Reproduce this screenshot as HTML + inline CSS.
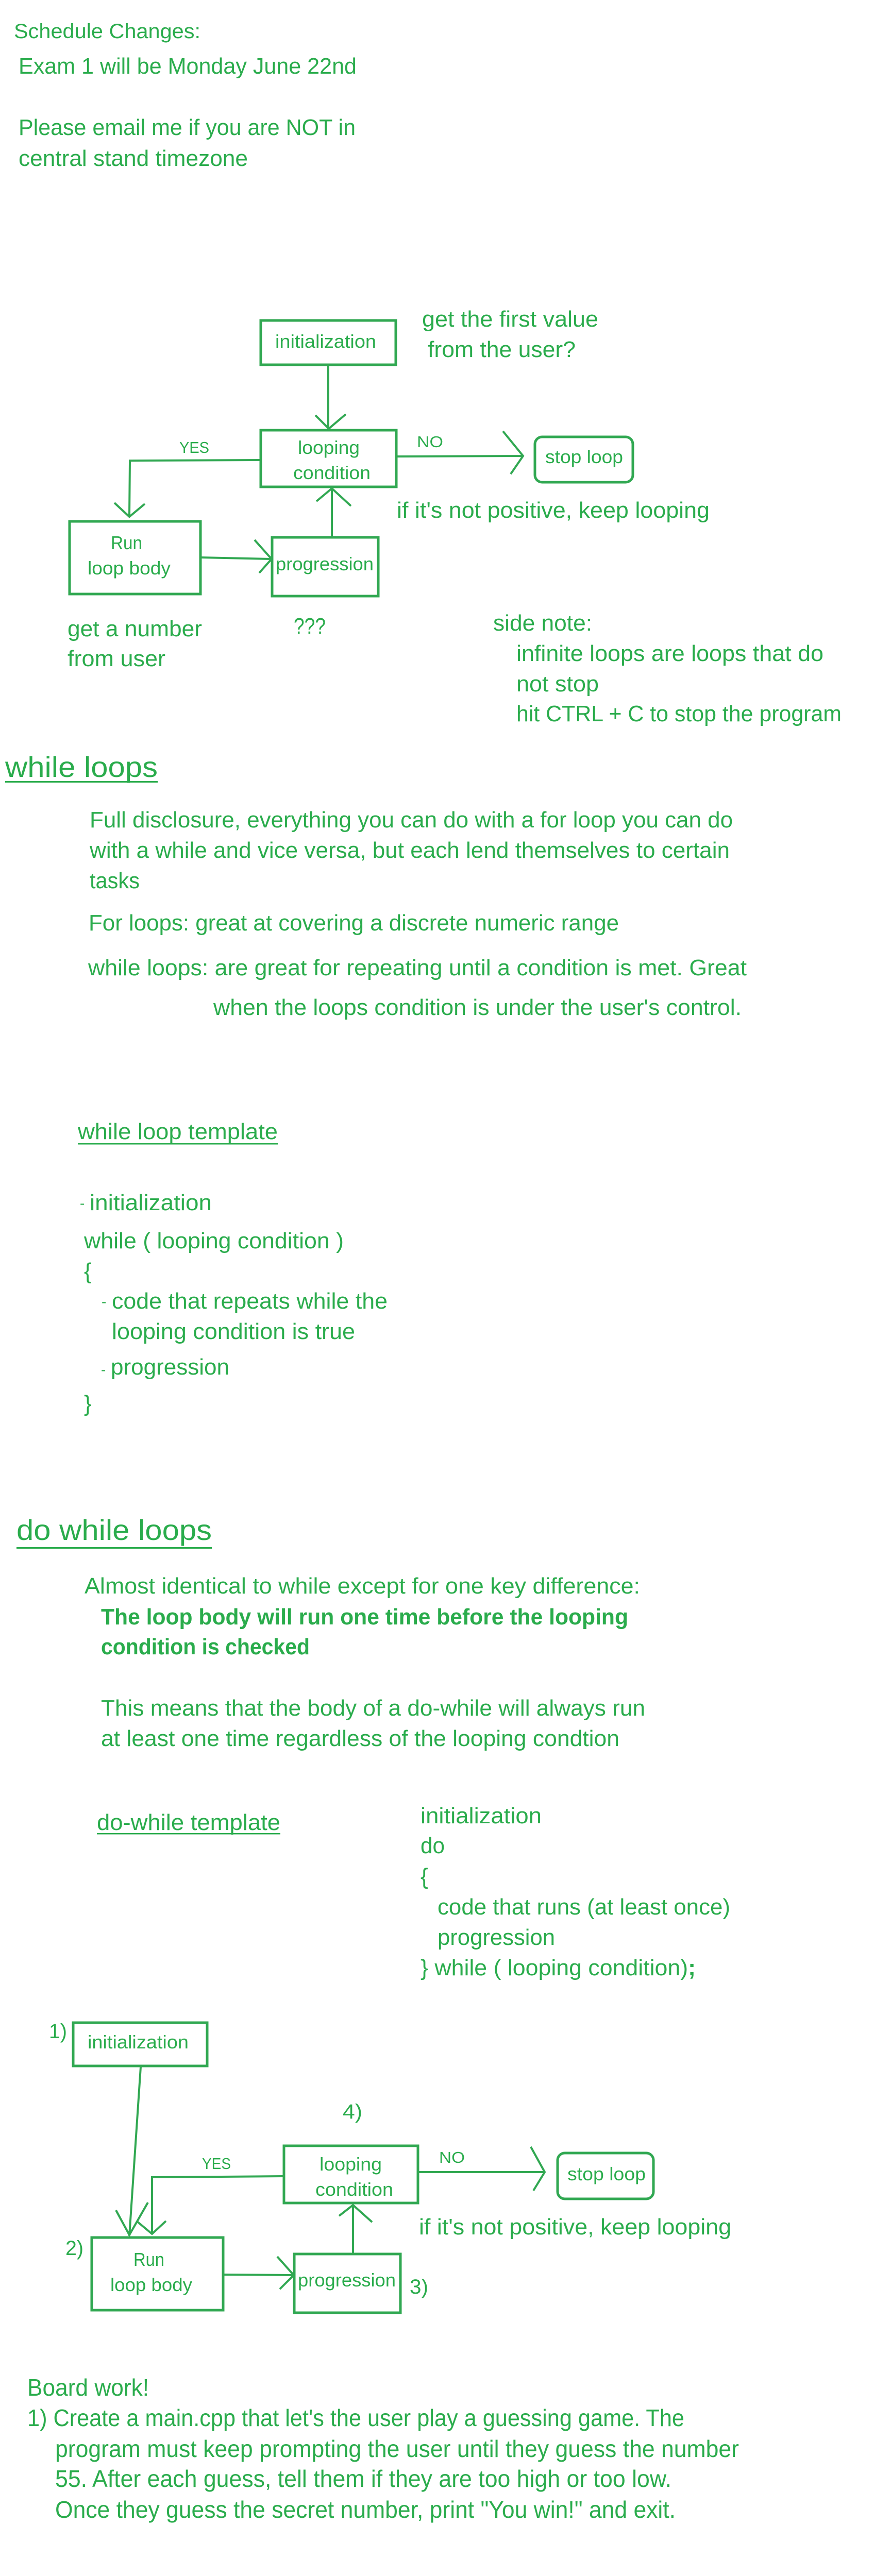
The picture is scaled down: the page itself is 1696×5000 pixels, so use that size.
<!DOCTYPE html>
<html><head><meta charset="utf-8"><style>
html,body{margin:0;padding:0;background:#fff;}
svg{display:block}
text{font-family:"Liberation Sans",sans-serif;fill:#2aac4c;}
.b{font-size:44px}.s{font-size:36px}.y{font-size:31px}.h{font-size:56px}
</style></head><body>
<svg width="1696" height="5000" viewBox="0 0 1696 5000" xmlns="http://www.w3.org/2000/svg">
<rect width="1696" height="5000" fill="#fff"/>
<g stroke="#31a852" fill="none" stroke-width="5" stroke-linejoin="miter">
<!-- diagram 1 -->
<rect x="506" y="622" width="262" height="86"/>
<rect x="506" y="835" width="263" height="110"/>
<rect x="135" y="1012" width="254" height="141"/>
<rect x="528" y="1043" width="206" height="114"/>
<rect x="1038" y="848" width="190" height="88" rx="14"/>
<g stroke-width="4">
<path d="M637 708 L637 832 M612 806 L638 832 L671 804"/>
<path d="M506 893 L252 894 L251 1003 M222 976 L251 1003 L281 978"/>
<path d="M769 886 L1015 885 M976 837 L1015 885 L991 920"/>
<path d="M389 1082 L527 1085 M494 1048 L527 1085 L503 1112"/>
<path d="M644 1043 L644 948 M614 973 L644 948 L681 982"/>
</g>
<!-- diagram 2 -->
<rect x="142" y="3926" width="260" height="84"/>
<rect x="551" y="4165" width="260" height="111"/>
<rect x="178" y="4343" width="255" height="141"/>
<rect x="571" y="4375" width="206" height="114"/>
<rect x="1082" y="4179" width="186" height="89" rx="14"/>
<g stroke-width="4">
<path d="M273 4012 L251 4340 M225 4290 L251 4338 L287 4275"/>
<path d="M551 4224 L295 4226 L295 4336 M265 4311 L295 4336 L322 4311"/>
<path d="M811 4216 L1057 4216 M1030 4167 L1057 4216 L1035 4252"/>
<path d="M433 4415 L570 4416 M538 4380 L570 4416 L543 4443"/>
<path d="M685 4375 L685 4280 M658 4301 L685 4280 L722 4313"/>
</g>
</g>
<g fill="#2aac4c">
<rect x="10" y="1516" width="296" height="3"/>
<rect x="151" y="2219" width="388" height="2.5"/>
<rect x="32" y="3003" width="379" height="3"/>
<rect x="188" y="3558" width="356" height="2.5"/>
</g>

<text x="27" y="74" style="font-size:40px" textLength="362" lengthAdjust="spacingAndGlyphs">Schedule Changes:</text>
<text class="b" x="36" y="143" textLength="656" lengthAdjust="spacingAndGlyphs">Exam 1 will be Monday June 22nd</text>
<text class="b" x="36" y="262" textLength="654" lengthAdjust="spacingAndGlyphs">Please email me if you are NOT in</text>
<text class="b" x="36" y="322" textLength="445" lengthAdjust="spacingAndGlyphs">central stand timezone</text>

<text class="s" x="534" y="675" textLength="196" lengthAdjust="spacingAndGlyphs">initialization</text>
<text class="b" x="819" y="634" textLength="342" lengthAdjust="spacingAndGlyphs">get the first value</text>
<text class="b" x="830" y="693" textLength="287" lengthAdjust="spacingAndGlyphs">from the user?</text>
<text class="s" x="578" y="881" textLength="120" lengthAdjust="spacingAndGlyphs">looping</text>
<text class="s" x="569" y="930" textLength="150" lengthAdjust="spacingAndGlyphs">condition</text>
<text class="y" x="348" y="879" textLength="58" lengthAdjust="spacingAndGlyphs">YES</text>
<text class="y" x="809" y="868" textLength="51" lengthAdjust="spacingAndGlyphs">NO</text>
<text class="s" x="1058" y="899" textLength="151" lengthAdjust="spacingAndGlyphs">stop loop</text>
<text class="b" x="770" y="1005" textLength="607" lengthAdjust="spacingAndGlyphs">if it's not positive, keep looping</text>
<text class="s" x="215" y="1066" textLength="61" lengthAdjust="spacingAndGlyphs">Run</text>
<text class="s" x="170" y="1115" textLength="161" lengthAdjust="spacingAndGlyphs">loop body</text>
<text class="s" x="535" y="1107" textLength="190" lengthAdjust="spacingAndGlyphs">progression</text>
<text class="b" x="131" y="1235" textLength="261" lengthAdjust="spacingAndGlyphs">get a number</text>
<text class="b" x="131" y="1293" textLength="190" lengthAdjust="spacingAndGlyphs">from user</text>
<text class="b" x="570" y="1230" textLength="62" lengthAdjust="spacingAndGlyphs">???</text>
<text class="b" x="957" y="1224" textLength="192" lengthAdjust="spacingAndGlyphs">side note:</text>
<text class="b" x="1002" y="1283" textLength="596" lengthAdjust="spacingAndGlyphs">infinite loops are loops that do</text>
<text class="b" x="1002" y="1342" textLength="160" lengthAdjust="spacingAndGlyphs">not stop</text>
<text class="b" x="1002" y="1400" textLength="631" lengthAdjust="spacingAndGlyphs">hit CTRL + C to stop the program</text>

<text class="h" x="10" y="1508" textLength="296" lengthAdjust="spacingAndGlyphs">while loops</text>
<text class="b" x="174" y="1606" textLength="1248" lengthAdjust="spacingAndGlyphs">Full disclosure, everything you can do with a for loop you can do</text>
<text class="b" x="174" y="1665" textLength="1242" lengthAdjust="spacingAndGlyphs">with a while and vice versa, but each lend themselves to certain</text>
<text class="b" x="174" y="1724" textLength="97" lengthAdjust="spacingAndGlyphs">tasks</text>
<text class="b" x="172" y="1806" textLength="1029" lengthAdjust="spacingAndGlyphs">For loops: great at covering a discrete numeric range</text>
<text class="b" x="171" y="1893" textLength="1278" lengthAdjust="spacingAndGlyphs">while loops: are great for repeating until a condition is met. Great</text>
<text class="b" x="414" y="1970" textLength="1025" lengthAdjust="spacingAndGlyphs">when the loops condition is under the user's control.</text>
<text class="b" x="151" y="2211" textLength="388" lengthAdjust="spacingAndGlyphs">while loop template</text>
<text style="font-size:28px" x="155" y="2345">-</text>
<text class="b" x="174" y="2349" textLength="237" lengthAdjust="spacingAndGlyphs">initialization</text>
<text class="b" x="163" y="2423" textLength="504" lengthAdjust="spacingAndGlyphs">while ( looping condition )</text>
<text class="b" x="163" y="2482">{</text>
<text style="font-size:28px" x="197" y="2536">-</text>
<text class="b" x="217" y="2540" textLength="535" lengthAdjust="spacingAndGlyphs">code that repeats while the</text>
<text class="b" x="217" y="2599" textLength="472" lengthAdjust="spacingAndGlyphs">looping condition is true</text>
<text style="font-size:28px" x="196" y="2668">-</text>
<text class="b" x="215" y="2668" textLength="230" lengthAdjust="spacingAndGlyphs">progression</text>
<text class="b" x="163" y="2739">}</text>

<text class="h" x="32" y="2989" textLength="379" lengthAdjust="spacingAndGlyphs">do while loops</text>
<text class="b" x="164" y="3093" textLength="1078" lengthAdjust="spacingAndGlyphs">Almost identical to while except for one key difference:</text>
<text class="b" x="196" y="3153" font-weight="bold" textLength="1023" lengthAdjust="spacingAndGlyphs">The loop body will run one time before the looping</text>
<text class="b" x="196" y="3211" font-weight="bold" textLength="405" lengthAdjust="spacingAndGlyphs">condition is checked</text>
<text class="b" x="196" y="3330" textLength="1056" lengthAdjust="spacingAndGlyphs">This means that the body of a do-while will always run</text>
<text class="b" x="196" y="3389" textLength="1006" lengthAdjust="spacingAndGlyphs">at least one time regardless of the looping condtion</text>
<text class="b" x="188" y="3552" textLength="356" lengthAdjust="spacingAndGlyphs">do-while template</text>
<text class="b" x="816" y="3539" textLength="235" lengthAdjust="spacingAndGlyphs">initialization</text>
<text class="b" x="816" y="3597" textLength="47" lengthAdjust="spacingAndGlyphs">do</text>
<text class="b" x="816" y="3657">{</text>
<text class="b" x="849" y="3716" textLength="568" lengthAdjust="spacingAndGlyphs">code that runs (at least once)</text>
<text class="b" x="849" y="3775" textLength="228" lengthAdjust="spacingAndGlyphs">progression</text>
<text class="b" x="816" y="3834" textLength="534" lengthAdjust="spacingAndGlyphs">} while ( looping condition)<tspan font-weight="bold">;</tspan></text>

<text style="font-size:40px" x="95" y="3956" textLength="35" lengthAdjust="spacingAndGlyphs">1)</text>
<text class="s" x="170" y="3976" textLength="196" lengthAdjust="spacingAndGlyphs">initialization</text>
<text style="font-size:40px" x="665" y="4112" textLength="38" lengthAdjust="spacingAndGlyphs">4)</text>
<text class="s" x="620" y="4213" textLength="121" lengthAdjust="spacingAndGlyphs">looping</text>
<text class="s" x="612" y="4262" textLength="151" lengthAdjust="spacingAndGlyphs">condition</text>
<text class="y" x="392" y="4210" textLength="56" lengthAdjust="spacingAndGlyphs">YES</text>
<text class="y" x="852" y="4198" textLength="50" lengthAdjust="spacingAndGlyphs">NO</text>
<text class="s" x="1101" y="4232" textLength="152" lengthAdjust="spacingAndGlyphs">stop loop</text>
<text class="b" x="813" y="4337" textLength="606" lengthAdjust="spacingAndGlyphs">if it's not positive, keep looping</text>
<text style="font-size:40px" x="127" y="4377" textLength="35" lengthAdjust="spacingAndGlyphs">2)</text>
<text class="s" x="259" y="4398" textLength="60" lengthAdjust="spacingAndGlyphs">Run</text>
<text class="s" x="214" y="4447" textLength="159" lengthAdjust="spacingAndGlyphs">loop body</text>
<text class="s" x="578" y="4438" textLength="190" lengthAdjust="spacingAndGlyphs">progression</text>
<text style="font-size:40px" x="795" y="4452" textLength="36" lengthAdjust="spacingAndGlyphs">3)</text>

<text style="font-size:46px" x="53" y="4650" textLength="236" lengthAdjust="spacingAndGlyphs">Board work!</text>
<text style="font-size:46px" x="53" y="4709" textLength="1275" lengthAdjust="spacingAndGlyphs">1) Create a main.cpp that let's the user play a guessing game. The</text>
<text style="font-size:46px" x="107" y="4769" textLength="1327" lengthAdjust="spacingAndGlyphs">program must keep prompting the user until they guess the number</text>
<text style="font-size:46px" x="107" y="4827" textLength="1196" lengthAdjust="spacingAndGlyphs">55. After each guess, tell them if they are too high or too low.</text>
<text style="font-size:46px" x="107" y="4887" textLength="1204" lengthAdjust="spacingAndGlyphs">Once they guess the secret number, print "You win!" and exit.</text>
</svg>
</body></html>
